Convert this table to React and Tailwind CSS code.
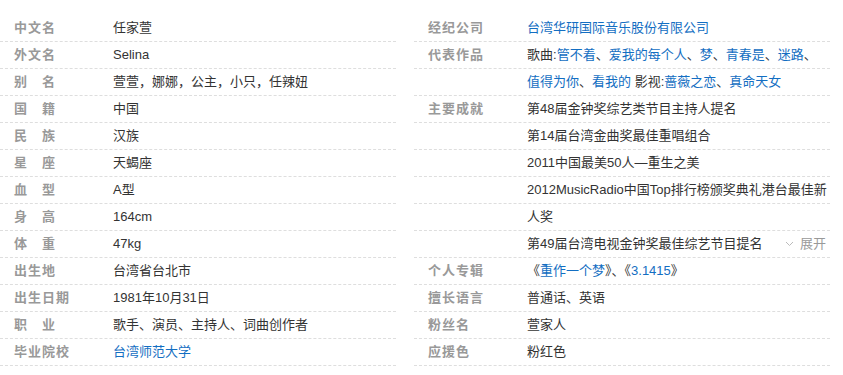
import React from 'react';

const font = { fontFamily: '"Liberation Sans", Arial, "Noto Sans CJK SC", sans-serif' };

const L = ({ children }) => <a className="text-[#136ec2] no-underline">{children}</a>;

const leftRows = [
  ['中文名', '任家萱'],
  ['外文名', 'Selina'],
  ['别名', '萱萱，娜娜，公主，小只，任辣妞'],
  ['国籍', '中国'],
  ['民族', '汉族'],
  ['星座', '天蝎座'],
  ['血型', 'A型'],
  ['身高', '164cm'],
  ['体重', '47kg'],
  ['出生地', '台湾省台北市'],
  ['出生日期', '1981年10月31日'],
  ['职业', '歌手、演员、主持人、词曲创作者'],
  ['毕业院校', <L>台湾师范大学</L>],
];

const rightRows = [
  ['经纪公司', <L>台湾华研国际音乐股份有限公司</L>],
  [
    '代表作品',
    <>
      歌曲:<L>管不着</L>、<L>爱我的每个人</L>、<L>梦</L>、<L>青春是</L>、<L>迷路</L>、
    </>,
  ],
  [
    '',
    <>
      <L>值得为你</L>、<L>看我的</L> 影视:<L>蔷薇之恋</L>、<L>真命天女</L>
    </>,
  ],
  ['主要成就', '第48届金钟奖综艺类节目主持人提名'],
  ['', '第14届台湾金曲奖最佳重唱组合'],
  ['', '2011中国最美50人—重生之美'],
  ['', '2012MusicRadio中国Top排行榜颁奖典礼港台最佳新'],
  ['', '人奖'],
  ['', '第49届台湾电视金钟奖最佳综艺节目提名', true],
  [
    '个人专辑',
    <>
      《<L>重作一个梦</L>》、《<L>3.1415</L>》
    </>,
  ],
  ['擅长语言', '普通话、英语'],
  ['粉丝名', '萱家人'],
  ['应援色', '粉红色'],
];

const Label = ({ text }) => {
  if (text.length === 2) {
    return (
      <div className="flex w-[41px] justify-between">
        <span>{text[0]}</span>
        <span>{text[1]}</span>
      </div>
    );
  }
  return <span className="tracking-[1px]">{text}</span>;
};

const Row = ({ label, value, more }) => (
  <div className="flex h-[27px] items-center border-b border-dashed border-[#dedede] text-[13px]">
    <div className="w-[113px] shrink-0 pl-[14px] font-bold text-[#999]">
      {label ? <Label text={label} /> : null}
    </div>
    <div className="flex-1 whitespace-nowrap text-[#333]">{value}</div>
    {more && (
      <div className="flex items-center gap-[6px] pr-[4px] text-[12px] text-[#999]">
        <svg width="9" height="6" viewBox="0 0 9 6" fill="none" stroke="#bbb" strokeWidth="1">
          <path d="M1 1l3.5 3.5L8 1" />
        </svg>
        <span className="text-[13px]">展开</span>
      </div>
    )}
  </div>
);

export default function App() {
  return (
    <div className="h-[375px] w-[843px] bg-white pt-[15px]" style={font}>
      <div className="flex">
        <div className="w-[396px]">
          {leftRows.map(([l, v], i) => (
            <Row key={i} label={l} value={v} />
          ))}
        </div>
        <div className="ml-[18px] w-[416px]">
          {rightRows.map(([l, v, m], i) => (
            <Row key={i} label={l} value={v} more={m} />
          ))}
        </div>
      </div>
    </div>
  );
}
